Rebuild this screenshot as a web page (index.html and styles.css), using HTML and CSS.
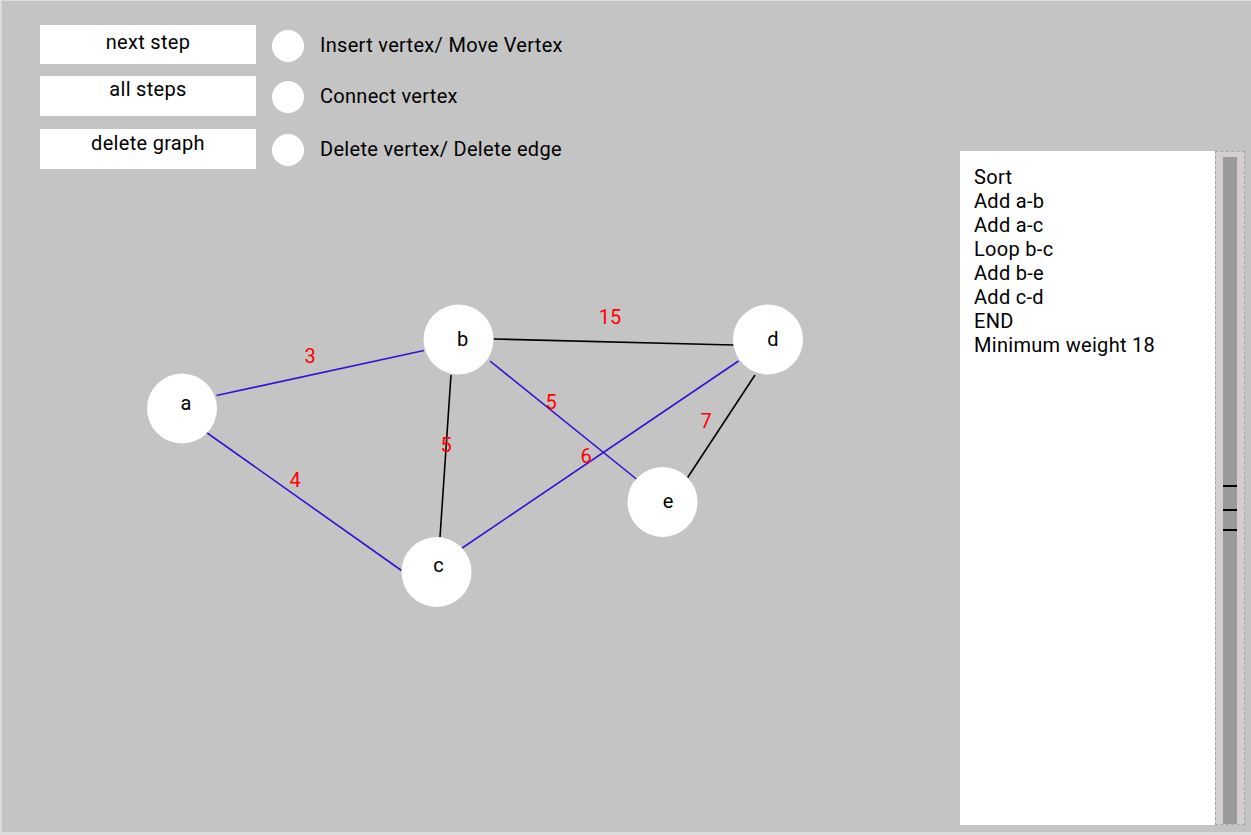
FILE: index.html
```html
<!DOCTYPE html>
<html>
<head>
<meta charset="utf-8">
<link rel="stylesheet" href="styles.css">
</head>
<body>
<div class="app">
  <div class="stage">
    <div class="controls">
      <div class="buttons">
        <div class="btn btn-first">next step</div>
        <div class="btn">all steps</div>
        <div class="btn btn-last">delete graph</div>
      </div>
      <div class="modes">
        <div class="mode"><span class="radio"></span><span class="mode-label">Insert vertex/ Move Vertex</span></div>
        <div class="mode"><span class="radio"></span><span class="mode-label">Connect vertex</span></div>
        <div class="mode"><span class="radio"></span><span class="mode-label">Delete vertex/ Delete edge</span></div>
      </div>
    </div>
    <svg class="graph" viewBox="2 1 958 831" width="958" height="831">
      <g class="edges">
        <line class="e-blue" x1="216.5" y1="395.5" x2="424" y2="350.5"/>
        <line class="e-blue" x1="206.5" y1="432.5" x2="401.5" y2="570.5"/>
        <line class="e-black" x1="451" y1="375" x2="440" y2="537"/>
        <line class="e-black" x1="493.5" y1="339" x2="733.5" y2="345"/>
        <line class="e-blue" x1="490" y1="361" x2="637" y2="479.5"/>
        <line class="e-blue" x1="458.5" y1="550.5" x2="738.5" y2="361"/>
        <line class="e-black" x1="755" y1="375" x2="686" y2="480"/>
      </g>
      <g class="weights">
        <text x="310" y="363">3</text>
        <text x="295" y="487">4</text>
        <text x="446" y="452">5</text>
        <text x="610" y="324">15</text>
        <text x="551" y="409">5</text>
        <text x="586" y="463">6</text>
        <text x="706" y="428">7</text>
      </g>
      <g class="nodes">
        <circle cx="182" cy="408.5" r="35"/>
        <circle cx="458.5" cy="339.5" r="35"/>
        <circle cx="436.5" cy="572" r="35"/>
        <circle cx="768" cy="339.5" r="35"/>
        <circle cx="662.5" cy="502" r="35"/>
      </g>
      <g class="labels">
        <text x="186" y="410">a</text>
        <text x="462.5" y="346">b</text>
        <text x="438.5" y="572">c</text>
        <text x="773" y="346">d</text>
        <text x="668" y="508">e</text>
      </g>
    </svg>
  </div>
  <div class="side">
    <div class="log">
      <div>Sort</div>
      <div>Add a-b</div>
      <div>Add a-c</div>
      <div>Loop b-c</div>
      <div>Add b-e</div>
      <div>Add c-d</div>
      <div>END</div>
      <div>Minimum weight 18</div>
    </div>
    <div class="scroll">
      <div class="track">
        <span class="tick tick-1"></span>
        <span class="tick tick-2"></span>
        <span class="tick tick-3"></span>
      </div>
    </div>
  </div>
</div>
</body>
</html>
```
FILE: styles.css
```css
html, body {
  margin: 0;
  padding: 0;
}
body {
  background: #dcdcdc;
  font-family: Roboto, "Liberation Sans", sans-serif;
  color: #000;
  width: 1251px;
  height: 835px;
  overflow: hidden;
}
.app {
  margin: 1px 0 0 2px;
  width: 1249px;
  height: 831px;
  background: #c4c4c4;
  display: flex;
}
.stage {
  position: relative;
  width: 958px;
  height: 831px;
}
.controls {
  display: flex;
  gap: 16px;
  padding: 24px 0 0 38px;
  position: relative;
  z-index: 1;
}
.buttons {
  display: flex;
  flex-direction: column;
  gap: 12px;
  width: 216px;
}
.btn {
  background: #fff;
  height: 40px;
  box-sizing: border-box;
  text-align: center;
  font-size: 20px;
  line-height: 24px;
  letter-spacing: 0.3px;
  padding-top: 1px;
}
.btn-first {
  height: 39px;
  padding-top: 5px;
}
.btn-last {
  margin-top: 1px;
  padding-top: 2px;
}
.modes {
  display: flex;
  flex-direction: column;
  padding-top: 5px;
  gap: 19px;
}
.mode {
  display: flex;
  align-items: center;
  gap: 16px;
  height: 32px;
}
.mode:last-child {
  margin-top: 2px;
}
.radio {
  width: 32px;
  height: 32px;
  border-radius: 50%;
  background: #fff;
}
.mode-label {
  font-size: 20px;
  line-height: 24px;
  letter-spacing: 0.3px;
  margin-top: -2px;
}
.graph {
  position: absolute;
  left: 0;
  top: 0;
}
.graph line {
  stroke-width: 1.6;
}
.e-blue {
  stroke: #3510d4;
}
.e-black {
  stroke: #000;
}
.nodes circle {
  fill: #fff;
}
.weights text {
  fill: #ff0000;
  font-size: 20px;
  text-anchor: middle;
  font-family: Roboto, "Liberation Sans", sans-serif;
}
.labels text {
  fill: #000;
  font-size: 20px;
  text-anchor: middle;
  font-family: Roboto, "Liberation Sans", sans-serif;
}
.side {
  display: flex;
  padding-top: 150px;
  height: 674px;
}
.log {
  background: #fff;
  width: 255px;
  height: 674px;
  box-sizing: border-box;
  padding: 14px 0 0 14px;
  font-size: 20px;
  line-height: 24px;
  letter-spacing: 0.3px;
}
.scroll {
  width: 30px;
  height: 674px;
  box-sizing: border-box;
  border: 1px dashed #a5a5a5;
  background: #d3cfcf;
  padding: 5px 7px 0 7px;
}
.track {
  position: relative;
  background: #9a9a9a;
  height: 100%;
}
.tick {
  position: absolute;
  left: 0;
  right: 0;
  height: 2px;
  background: #000;
}
.tick-1 { top: 328px; }
.tick-2 { top: 352px; }
.tick-3 { top: 372px; }
```
